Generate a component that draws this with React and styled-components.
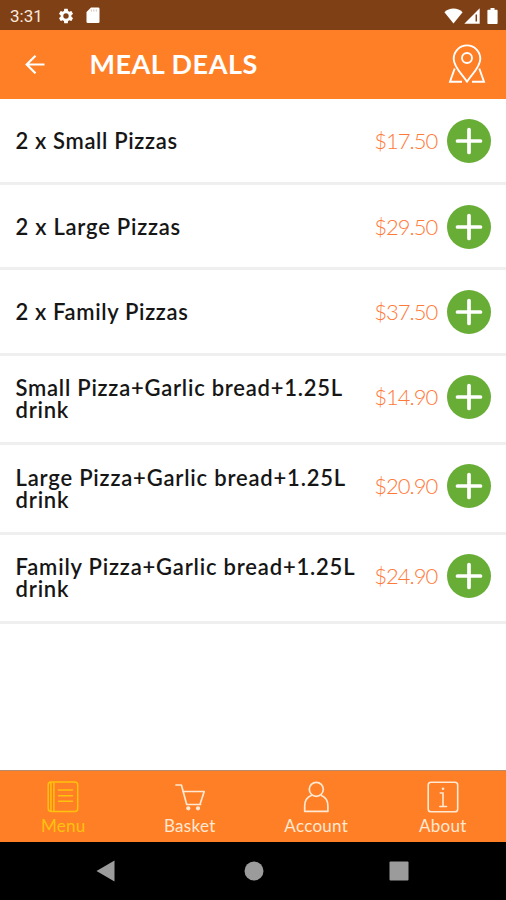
/* eslint-disable react/prop-types */
import React from 'react';
import styled, { createGlobalStyle } from 'styled-components';

const GlobalStyle = createGlobalStyle`
  * {
    box-sizing: border-box;
  }

  body {
    margin: 0;
    background: #fff;
    font-family: Lato, 'Open Sans', sans-serif;
  }

  button {
    padding: 0;
    border: none;
    background: none;
    font-family: inherit;
  }

  svg {
    display: block;
  }
`;

const Screen = styled.div`
  display: flex;
  flex-direction: column;
  width: 506px;
  height: 900px;
  overflow: hidden;
  background: #fff;
`;

const StatusBar = styled.div`
  display: flex;
  align-items: center;
  justify-content: space-between;
  height: 30px;
  padding: 1px 8px 0 10px;
  background: #7f4015;
  color: #fff;
`;

const StatusGroup = styled.div`
  display: flex;
  align-items: center;
  gap: ${(props) => props.$gap};
`;

const Clock = styled.span`
  width: 34px;
  margin-right: 2px;
  color: #fbe9df;
  font-family: Roboto, sans-serif;
  font-size: 17px;
  white-space: nowrap;
`;

const Header = styled.header`
  display: flex;
  align-items: center;
  height: 68.6px;
  padding: 0 20px 0 24px;
  background: #ff7f27;
`;

const IconButton = styled.button`
  color: #fff;
`;

const Title = styled.h1`
  flex: 1;
  margin: 0 0 0 43.5px;
  color: #fff;
  font-size: 27px;
  font-weight: 700;
  letter-spacing: 0.5px;
  line-height: 32px;
`;

const DealList = styled.main`
  flex: 1;
  padding-top: 1px;
`;

const DealRow = styled.div`
  display: flex;
  align-items: flex-start;
  height: ${(props) => (props.$tall ? '89.4px' : '85.4px')};
  padding: ${(props) => (props.$tall ? '19.2px' : '19.6px')} 14.6px 0 15.5px;
  border-bottom: 3px solid #efefef;
`;

const DealName = styled.div`
  flex: 1;
  padding-top: ${(props) => (props.$tall ? '2.4px' : '11px')};
  color: #161616;
  font-size: 22px;
  font-weight: 600;
  letter-spacing: ${(props) => props.$spacing};
  line-height: 22px;
  white-space: pre-line;
`;

const Price = styled.div`
  margin-right: 10px;
  color: #ff7a38;
  font-size: 22px;
  font-weight: 300;
  letter-spacing: -0.95px;
  line-height: 43px;
`;

const AddButton = styled.button`
  width: 44px;
  height: 44px;
  border-radius: 50%;
  background: #68ad35;
`;

const TabBar = styled.nav`
  display: grid;
  grid-template-columns: repeat(4, 1fr);
  height: 71.6px;
  border-top: 1px solid #b78d70;
  background: #ff7f27;
`;

const Tab = styled.button`
  display: flex;
  flex-direction: column;
  align-items: center;
  padding-top: 10px;
  color: ${(props) => (props.$active ? '#ffc20e' : '#ffe9d2')};
  font-size: 17px;
  letter-spacing: 0.3px;
  line-height: 20px;
`;

const TabLabel = styled.span`
  margin-top: 3px;
`;

const SystemNav = styled.div`
  display: flex;
  align-items: center;
  justify-content: space-between;
  height: 58px;
  padding: 0 97px 0 96px;
  background: #000;
`;

const HomeIcon = styled.svg`
  margin-left: 3px;
`;

const deals = [
  { name: '2 x Small Pizzas', price: '$17.50', spacing: '0.65px' },
  { name: '2 x Large Pizzas', price: '$29.50', spacing: '0.75px' },
  { name: '2 x Family Pizzas', price: '$37.50', spacing: '0.65px' },
  {
    name: 'Small Pizza+Garlic bread+1.25L\ndrink', price: '$14.90', spacing: '0.75px', tall: true,
  },
  {
    name: 'Large Pizza+Garlic bread+1.25L\ndrink', price: '$20.90', spacing: '0.8px', tall: true,
  },
  {
    name: 'Family Pizza+Garlic bread+1.25L\ndrink', price: '$24.90', spacing: '0.8px', tall: true,
  },
];

const SettingsIcon = () => (
  <svg width="18" height="18" viewBox="0 0 24 24" fill="currentColor">
    <path d="M19.14 12.94c.04-.3.06-.61.06-.94s-.02-.64-.07-.94l2.03-1.58a.5.5 0 0 0 .12-.61l-1.92-3.32a.5.5 0 0 0-.59-.22l-2.39.96a7 7 0 0 0-1.62-.94l-.36-2.54a.5.5 0 0 0-.48-.41h-3.84a.5.5 0 0 0-.47.41l-.36 2.54a7 7 0 0 0-1.62.94l-2.39-.96a.5.5 0 0 0-.59.22L2.74 8.87a.5.5 0 0 0 .12.61l2.03 1.58a6 6 0 0 0 0 1.88l-2.03 1.58a.5.5 0 0 0-.12.61l1.92 3.32c.12.22.37.29.59.22l2.39-.96c.5.38 1.03.7 1.62.94l.36 2.54c.05.24.24.41.48.41h3.84c.24 0 .44-.17.47-.41l.36-2.54a7 7 0 0 0 1.62-.94l2.39.96c.22.08.47 0 .59-.22l1.92-3.32a.5.5 0 0 0-.12-.61zM12 15.6a3.6 3.6 0 1 1 0-7.2 3.6 3.6 0 0 1 0 7.2z" />
  </svg>
);

const SdCardIcon = () => (
  <svg width="14" height="17" viewBox="0 0 14 17">
    <path d="M5 .5h7.2a1.3 1.3 0 0 1 1.3 1.3v13a1.3 1.3 0 0 1-1.3 1.3H1.8a1.3 1.3 0 0 1-1.3-1.3V5z" fill="currentColor" />
    <path d="M5.3 2.4v2.2M7.8 2.4v2.2M10.3 2.4v2.2" stroke="#d9c1b1" strokeWidth="1" />
  </svg>
);

const WifiIcon = () => (
  <svg width="19" height="16" viewBox="0 0 19 16" fill="currentColor">
    <path d="M9.5 15.5.4 4.2C2.8 1.8 6 .6 9.5.6s6.7 1.2 9.1 3.6z" />
  </svg>
);

const SignalIcon = () => (
  <svg width="16" height="16" viewBox="0 0 16 16">
    <path d="M.3 15.7 15.7.3v15.4z" fill="currentColor" />
    <path d="M12.3 6.5v7" stroke="#7f4015" strokeWidth="1.5" />
  </svg>
);

const BatteryIcon = () => (
  <svg width="11" height="16" viewBox="0 0 11 16" fill="currentColor">
    <path d="M3.5 0h4v1.7h2.1c.6 0 1 .4 1 1V15c0 .6-.4 1-1 1H1.4c-.6 0-1-.4-1-1V2.700c0-.6.4-1 1-1h2.100z" />
  </svg>
);

const BackIcon = () => (
  <svg width="22" height="20" viewBox="0 0 22 20" fill="none" stroke="currentColor" strokeWidth="2.2">
    <path d="M20.5 10.500H3M11.500 1.700 2.700 10.500l8.800 8.800" />
  </svg>
);

const MapIcon = () => (
  <svg width="38" height="40" viewBox="0 0 38 40" fill="none" stroke="currentColor" strokeWidth="1.900">
    <path d="M19 37.800C15 31 5.700 23.500 5.700 14.700a13.300 13.300 0 0 1 26.600 0C32.300 23.500 23 31 19 37.800z" strokeLinejoin="round" />
    <circle cx="19" cy="14" r="5" />
    <path d="M6.700 24.500 2 37.800h12M31.300 24.500 36 37.800H24" />
  </svg>
);

const PlusIcon = () => (
  <svg width="44" height="44" viewBox="0 0 44 44" fill="none" stroke="#fff" strokeWidth="3.700" strokeLinecap="round">
    <path d="M22 10.500v23M10.500 22h23" />
  </svg>
);

const MenuIcon = () => (
  <svg width="32" height="32" viewBox="0 0 32 32" fill="none" stroke="currentColor" strokeWidth="1.500" strokeLinecap="round">
    <rect x="1.200" y="1" width="29.500" height="29.500" rx="3" />
    <path d="M3.900 1.500v28.500M6.900 1.500v28.500M11.500 9H25.500M11.500 14.700H25.500M11.500 20.300H25.500" />
  </svg>
);

const BasketIcon = () => (
  <svg width="32" height="32" viewBox="0 0 32 32" fill="none" stroke="currentColor" strokeWidth="1.700" strokeLinecap="round" strokeLinejoin="round">
    <path d="M2 4h5.400l5.300 19.500h13.800M8.900 10.500h21.300l-4 12.300" />
    <circle cx="14.300" cy="27.300" r="1.300" fill="currentColor" />
    <circle cx="24" cy="27.300" r="1.300" fill="currentColor" />
  </svg>
);

const AccountIcon = () => (
  <svg width="32" height="32" viewBox="0 0 32 32" fill="none" stroke="currentColor" strokeWidth="1.700" strokeLinejoin="round">
    <circle cx="16.300" cy="8.300" r="7" />
    <path d="M11.800 14.200C6.800 16 4.700 20.500 4.700 25v5.300h23.200V25c0-4.500-2.100-9-7.100-10.800" />
  </svg>
);

const AboutIcon = () => (
  <svg width="32" height="32" viewBox="0 0 32 32" fill="none" stroke="currentColor" strokeWidth="1.600" strokeLinecap="round">
    <rect x="1.200" y="1.200" width="29.500" height="29.500" rx="2.800" />
    <circle cx="16" cy="7.700" r="1.300" fill="currentColor" stroke="none" />
    <path d="M13.300 12H16v13.500M12.800 25.500h6.700" />
  </svg>
);

const tabs = [
  { label: 'Menu', icon: MenuIcon },
  { label: 'Basket', icon: BasketIcon },
  { label: 'Account', icon: AccountIcon },
  { label: 'About', icon: AboutIcon },
];

const Deal = ({ deal }) => (
  <DealRow $tall={deal.tall}>
    <DealName $tall={deal.tall} $spacing={deal.spacing}>{deal.name}</DealName>
    <Price>{deal.price}</Price>
    <AddButton aria-label={`Add ${deal.name}`}>
      <PlusIcon />
    </AddButton>
  </DealRow>
);

const App = () => {
  const [activeTab, setActiveTab] = React.useState('Menu');

  return (
    <Screen>
      <GlobalStyle />
      <StatusBar>
        <StatusGroup $gap="11px">
          <Clock>3:31</Clock>
          <SettingsIcon />
          <SdCardIcon />
        </StatusGroup>
        <StatusGroup $gap="7px">
          <StatusGroup $gap="1px">
            <WifiIcon />
            <SignalIcon />
          </StatusGroup>
          <BatteryIcon />
        </StatusGroup>
      </StatusBar>
      <Header>
        <IconButton aria-label="Back"><BackIcon /></IconButton>
        <Title>MEAL DEALS</Title>
        <IconButton aria-label="Stores"><MapIcon /></IconButton>
      </Header>
      <DealList>
        {deals.map((deal) => <Deal key={deal.name} deal={deal} />)}
      </DealList>
      <TabBar>
        {tabs.map(({ label, icon: Icon }) => (
          <Tab
            key={label}
            $active={label === activeTab}
            onClick={() => setActiveTab(label)}
          >
            <Icon />
            <TabLabel>{label}</TabLabel>
          </Tab>
        ))}
      </TabBar>
      <SystemNav>
        <svg width="19" height="22" viewBox="0 0 19 22"><path d="M18.500.5v21L.5 11z" fill="#9b9b9b" /></svg>
        <HomeIcon width="20" height="20" viewBox="0 0 20 20"><circle cx="10" cy="10" r="9.500" fill="#9b9b9b" /></HomeIcon>
        <svg width="20" height="20" viewBox="0 0 20 20"><rect x=".5" y=".5" width="19" height="19" rx="1" fill="#9b9b9b" /></svg>
      </SystemNav>
    </Screen>
  );
};

export default App;
